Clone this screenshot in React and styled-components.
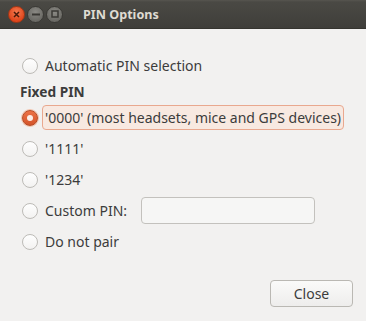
import React, { useState } from 'react'
import styled, { createGlobalStyle } from 'styled-components'

const Global = createGlobalStyle`
  html, body {
    margin: 0;
    padding: 0;
    background: #f2f1f0;
  }
  body {
    font-family: "Noto Sans", "DejaVu Sans", sans-serif;
    color: #3c3c3c;
  }
`

const Window = styled.div`
  width: 366px;
  height: 321px;
  display: flex;
  flex-direction: column;
  background: #f2f1f0;
  overflow: hidden;
`

const TitleBar = styled.div`
  height: 28px;
  flex: none;
  display: flex;
  align-items: center;
  padding-left: 8px;
  gap: 2px;
  background: linear-gradient(#57554f 0px, #4a4944 2px, #3f3e3a 100%);
  border-bottom: 1px solid #35342f;
`

const WinButton = styled.div`
  width: 17px;
  height: 17px;
  border-radius: 50%;
  display: flex;
  align-items: center;
  justify-content: center;
  background: ${p => p.$close
    ? 'radial-gradient(circle at 50% 35%, #f47a4f, #e0461c 70%)'
    : 'radial-gradient(circle at 50% 35%, #8a8984, #6b6a65 70%)'};
  border: 1px solid ${p => (p.$close ? '#a63715' : '#3a3935')};
  box-sizing: border-box;
`

const Title = styled.div`
  margin-left: 18px;
  font-weight: bold;
  font-size: 12.6px;
  color: #dfdbd2;
`

const Body = styled.div`
  flex: 1;
  display: flex;
  flex-direction: column;
  padding: 21px 13px 14px 20px;
`

const Options = styled.div`
  display: flex;
  flex-direction: column;
`

const Row = styled.label`
  display: flex;
  align-items: center;
  height: 31px;
  gap: 4px;
  margin-left: 2px;
  font-size: 14px;
`

const Heading = styled.div`
  font-weight: bold;
  font-size: 13.7px;
  height: 21px;
  display: flex;
  align-items: center;
`

const Circle = styled.span`
  width: 16px;
  height: 16px;
  box-sizing: border-box;
  border-radius: 50%;
  flex: none;
  display: flex;
  align-items: center;
  justify-content: center;
  border: 1px solid ${p => (p.$on ? '#b84c24' : '#bdbbb7')};
  background: ${p => p.$on
    ? 'linear-gradient(#ec7246, #d4552b)'
    : 'linear-gradient(#fefefe, #f3f2f1)'};
  box-shadow: ${p => (p.$on ? '0 0 0 1px #f2c3ad' : 'none')};
  &::after {
    content: '';
    display: ${p => (p.$on ? 'block' : 'none')};
    width: 6px;
    height: 6px;
    border-radius: 50%;
    background: #fbeee8;
  }
`

const Label = styled.span`
  padding: 2px 2px;
  border-radius: 4px;
  border: 1px solid ${p => (p.$focus ? '#e9a88f' : 'transparent')};
  background: ${p => (p.$focus ? '#f8e9e1' : 'transparent')};
  white-space: nowrap;
`

const Entry = styled.input`
  margin-left: 7px;
  width: 174px;
  height: 27px;
  box-sizing: border-box;
  border: 1px solid #c3c1bd;
  border-radius: 4px;
  background: #f6f6f5;
`

const Footer = styled.div`
  margin-top: auto;
  display: flex;
  justify-content: flex-end;
`

const Button = styled.button`
  width: 83px;
  height: 27px;
  border: 1px solid #bab8b3;
  border-radius: 4px;
  background: linear-gradient(#fafaf9, #eeedec);
  font-family: inherit;
  font-size: 14px;
  color: #3c3c3c;
`

const pins = [
  { id: 'auto', text: 'Automatic PIN selection' },
]

const fixed = [
  { id: '0000', text: "'0000' (most headsets, mice and GPS devices)" },
  { id: '1111', text: "'1111'" },
  { id: '1234', text: "'1234'" },
]

export default function App() {
  const [sel] = useState('0000')
  return (
    <Window>
      <Global />
      <TitleBar>
        <WinButton $close>
          <svg width="7" height="7" viewBox="0 0 7 7">
            <path d="M1 1L6 6M6 1L1 6" stroke="#4a1a0a" strokeWidth="1.5" />
          </svg>
        </WinButton>
        <WinButton>
          <svg width="8" height="3" viewBox="0 0 8 3">
            <rect x="0" y="0.5" width="8" height="2" fill="#3a3935" />
          </svg>
        </WinButton>
        <WinButton>
          <svg width="8" height="8" viewBox="0 0 8 8">
            <rect x="1" y="1" width="6" height="6" fill="none" stroke="#3a3935" strokeWidth="1.5" />
          </svg>
        </WinButton>
        <Title>PIN Options</Title>
      </TitleBar>
      <Body>
        <Options>
          {pins.map(p => (
            <Row key={p.id}>
              <Circle $on={sel === p.id} />
              <Label>{p.text}</Label>
            </Row>
          ))}
          <Heading>Fixed PIN</Heading>
          {fixed.map(p => (
            <Row key={p.id}>
              <Circle $on={sel === p.id} />
              <Label $focus={sel === p.id}>{p.text}</Label>
            </Row>
          ))}
          <Row>
            <Circle />
            <Label>Custom PIN:</Label>
            <Entry />
          </Row>
          <Row>
            <Circle />
            <Label>Do not pair</Label>
          </Row>
        </Options>
        <Footer>
          <Button>Close</Button>
        </Footer>
      </Body>
    </Window>
  )
}
